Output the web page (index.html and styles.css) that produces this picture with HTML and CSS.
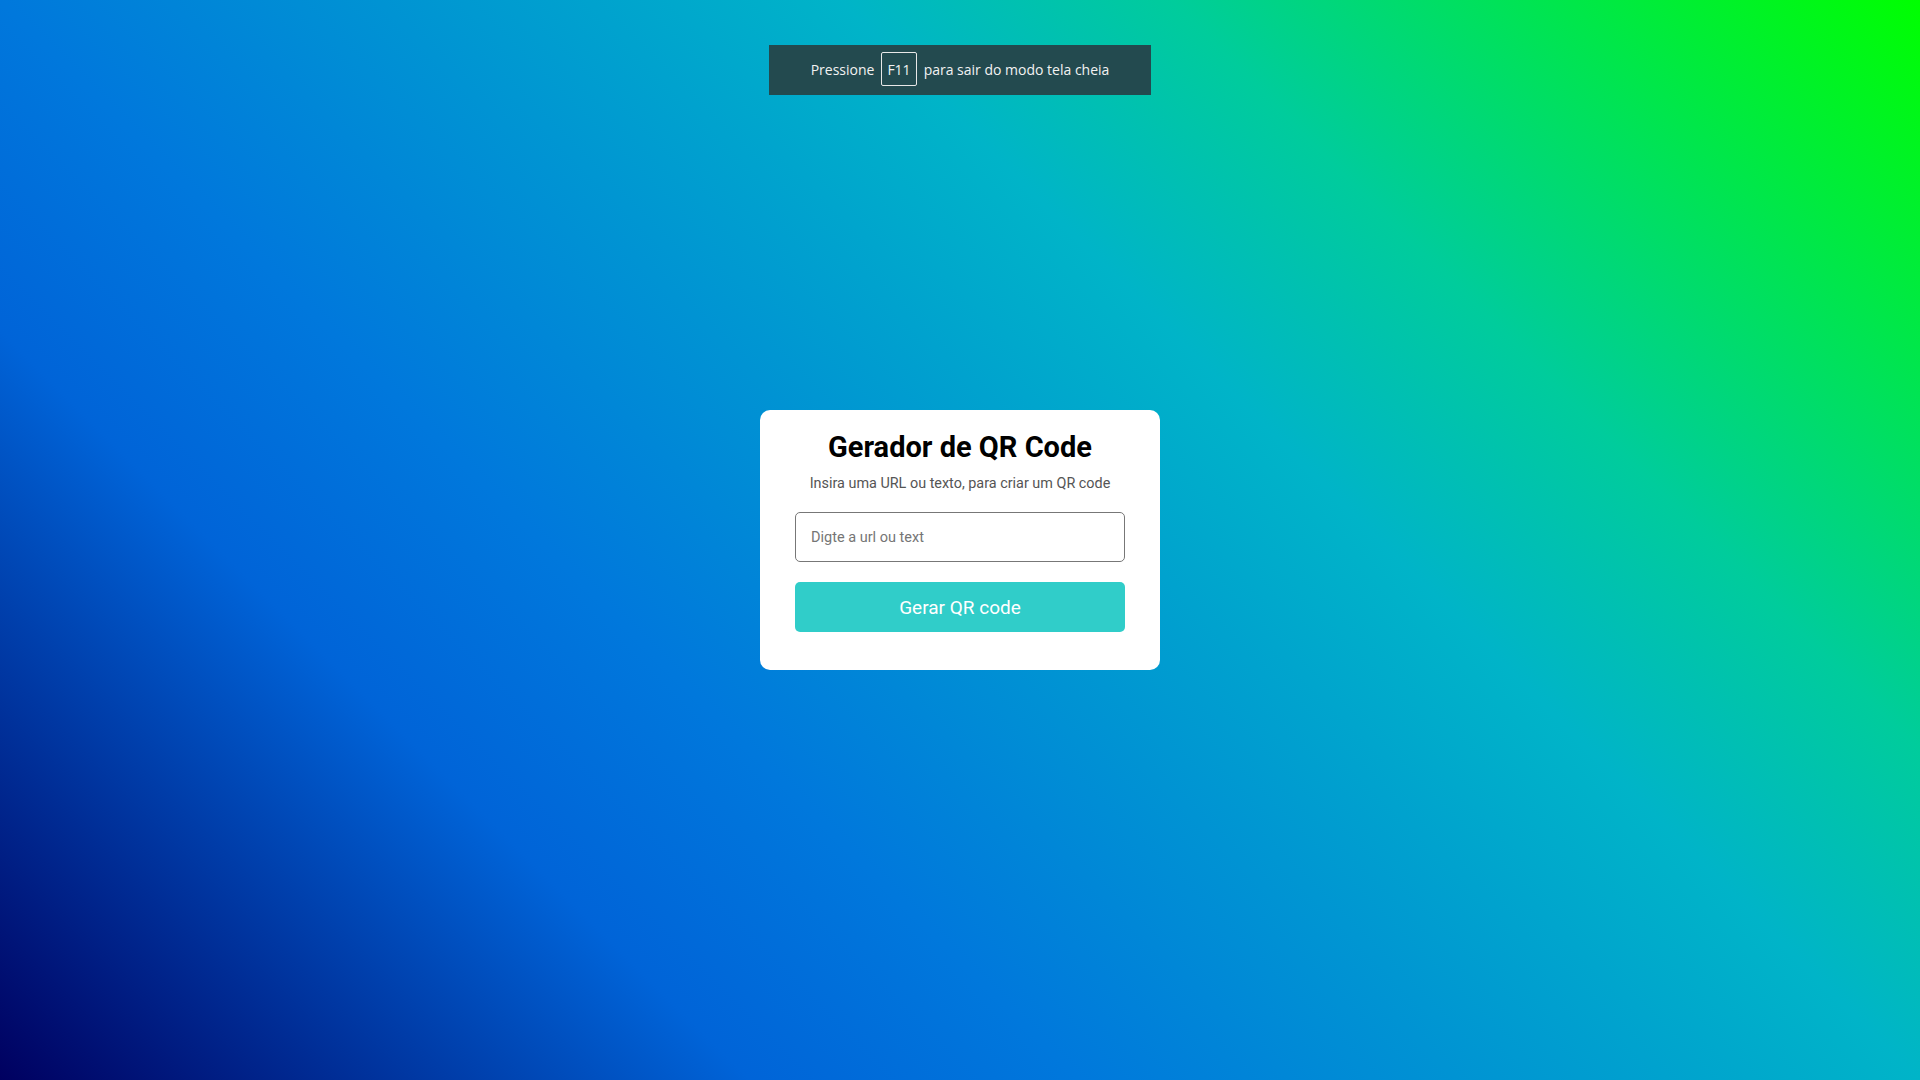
FILE: index.html
```html
<!DOCTYPE html>
<html lang="pt-BR">
<head>
<meta charset="utf-8">
<title>Gerador de QR Code</title>
<link rel="stylesheet" href="styles.css">
</head>
<body>
<div class="fs-bubble">
  <span>Pressione</span>
  <span class="key">F11</span>
  <span>para sair do modo tela cheia</span>
</div>
<main class="card">
  <h1 class="title">Gerador de QR Code</h1>
  <p class="subtitle">Insira uma URL ou texto, para criar um QR code</p>
  <input class="field" type="text" placeholder="Digte a url ou text">
  <button class="btn" type="button">Gerar QR code</button>
</main>
</body>
</html>
```
FILE: styles.css
```css
* { box-sizing: border-box; }
html, body { height: 100%; }
body {
  margin: 0;
  font-family: Roboto, "Noto Sans", sans-serif;
  background: linear-gradient(45deg, #000060 0%, #0064d8 25%, #0078dc 36%, #00b4c8 64%, #00cc9c 75%, #00ff00 100%);
  display: flex;
  align-items: center;
  justify-content: center;
}
.fs-bubble {
  position: absolute;
  top: 45px;
  left: 50%;
  transform: translateX(-50%);
  width: 382px;
  height: 50px;
  padding-bottom: 2px;
  background: #234a4f;
  color: #f2f2f2;
  font-family: "Open Sans", "Noto Sans", sans-serif;
  font-size: 14px;
  display: flex;
  align-items: center;
  justify-content: center;
  gap: 7px;
}
.key {
  border: 1px solid #e8e8e8;
  border-radius: 2px;
  height: 34px;
  padding: 0 5px;
  display: flex;
  align-items: center;
}
.card {
  width: 400px;
  background: #fff;
  border-radius: 10px;
  padding: 19px 35px 38px;
  display: flex;
  flex-direction: column;
  align-items: center;
}
.title {
  margin: 0;
  font-size: 29px;
  line-height: 36px;
  font-weight: 700;
  color: #000;
}
.subtitle {
  margin: 10px 0 20px;
  font-size: 14.4px;
  line-height: 17px;
  color: #555;
}
.field {
  width: 330px;
  height: 50px;
  border: 1px solid #777;
  border-radius: 5px;
  padding: 0 15px;
  font-family: Roboto, sans-serif;
  font-size: 14.5px;
  outline: none;
}
.field::placeholder { color: #757575; }
.btn {
  margin-top: 20px;
  width: 330px;
  height: 50px;
  border: none;
  border-radius: 5px;
  background: #30cdc9;
  color: #fff;
  font-family: Roboto, sans-serif;
  font-size: 19px;
  cursor: pointer;
}
```
